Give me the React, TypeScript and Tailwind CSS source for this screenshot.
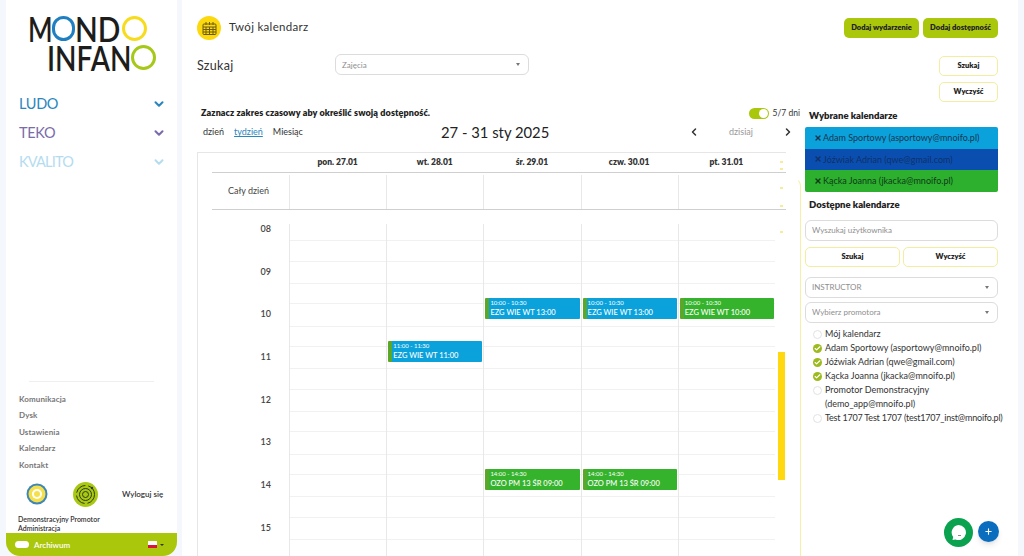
import React from "react";
import { ChevronDown, ChevronLeft, ChevronRight, Check, X, Plus } from "lucide-react";

const font = { fontFamily: "Lato, 'Noto Sans', sans-serif" };

function Logo() {
  return (
    <div className="flex flex-col font-semibold text-[#1d1d1b] text-[35px] leading-[27px] ml-[22px] pt-[15px]">
      <div className="flex items-center h-[27px]">
        <span className="inline-block w-[24px] origin-left scale-x-[0.75]">M</span>
        <span className="inline-block rounded-full border-[3px] border-[#1f7fc0] w-[23px] h-[25px]" />
        <span className="inline-block w-[47px] origin-left scale-x-[0.85]">ND</span>
        <span className="inline-block rounded-full border-[3px] border-[#f7dc1e] w-[25px] h-[25px]" />
      </div>
      <div className="flex items-center h-[27px] ml-[19px] mt-[2px]">
        <span className="inline-block w-[84px] origin-left scale-x-[0.8]">INFAN</span>
        <span className="inline-block rounded-full border-[3px] border-[#a6c818] w-[25px] h-[25px]" />
      </div>
    </div>
  );
}

function NavItem({ label, color, cls }: { label: string; color: string; cls?: string }) {
  return (
    <div className={`flex items-center justify-between h-[29px] pl-[13px] pr-[11px] ${color}`}>
      <span className={`text-[14.5px] font-normal ${cls ?? ""}`}>{label}</span>
      <ChevronDown size={14} strokeWidth={3.5} />
    </div>
  );
}

function Sidebar() {
  return (
    <aside className="w-[171px] ml-[6px] shrink-0 bg-white rounded-b-[14px] flex flex-col h-full">
      <div className="h-[89px]"><Logo /></div>
      <NavItem label="LUDO" color="text-[#2a86bd]" cls="tracking-[-0.3px]" />
      <NavItem label="TEKO" color="text-[#7a6bab]" cls="tracking-[-0.3px]" />
      <NavItem label="KVALITO" color="text-[#b4dcf0]" cls="tracking-[-0.8px]" />
      <div className="flex-1" />
      <div className="mx-[23px] border-t border-[#eeeff2]" />
      <nav className="mt-[12px] pl-[13px] flex flex-col gap-[5px] text-[8px] leading-[11.5px] font-bold text-[#777] tracking-[0.1px]">
        <span>Komunikacja</span>
        <span>Dysk</span>
        <span>Ustawienia</span>
        <span>Kalendarz</span>
        <span>Kontakt</span>
      </nav>
      <div className="flex items-center mt-[6px] h-[34px]">
        <svg className="ml-[20px]" width="22" height="22" viewBox="0 0 22 22">
          <circle cx="11" cy="11" r="10.5" fill="#3f86b8" />
          <circle cx="11" cy="11" r="8.5" fill="#f5e04a" />
          <circle cx="11" cy="11" r="5" fill="#ffffff" />
          <circle cx="11" cy="11" r="3" fill="#f5e04a" />
        </svg>
        <svg className="ml-[25px]" width="25" height="25" viewBox="0 0 25 25" fill="none" stroke="#2e3a16">
          <circle cx="12.5" cy="12.5" r="12.5" fill="#a9c813" stroke="none" />
          <circle cx="12.5" cy="12.5" r="9" strokeWidth="1" strokeDasharray="12 3" />
          <circle cx="12.5" cy="12.5" r="6" strokeWidth="1" />
          <circle cx="12.5" cy="12.5" r="3" strokeWidth="1" />
          <circle cx="19" cy="6" r="1.2" fill="#2e3a16" stroke="none" />
        </svg>
        <span className="ml-[24px] text-[8px] font-semibold text-[#333]">Wyloguj się</span>
      </div>
      <div className="pl-[12px] mt-[4px] text-[7px] leading-[9px] font-semibold text-[#333]">
        <div>Demonstracyjny Promotor</div>
        <div>Administracja</div>
      </div>
      <div className="h-[23px] bg-[#abc70c] rounded-b-[14px] flex items-center pl-[9px] pr-[13px]">
        <span className="w-[14px] h-[7px] rounded-full bg-white" />
        <span className="ml-[5px] text-[8px] font-semibold text-white">Archiwum</span>
        <span className="ml-auto flex flex-col w-[9px] h-[7px]">
          <span className="h-1/2 bg-white" />
          <span className="h-1/2 bg-[#dc143c]" />
        </span>
        <span className="ml-[3px] w-0 h-0 border-x-[2px] border-x-transparent border-t-[2px] border-t-[#333]" />
      </div>
    </aside>
  );
}

function CalendarIcon() {
  return (
    <span className="w-[24px] h-[24px] rounded-full bg-[#fcd90f] flex items-center justify-center">
      <svg width="15" height="15" viewBox="0 0 15 15" fill="none" stroke="#6b5a12" strokeWidth="1">
        <rect x="1" y="3" width="13" height="10.5" rx="1" />
        <path d="M1 6h13M1 8.5h13M1 11h13M4 1v3M7.5 1v3M11 1v3M4 6v7.5M7.5 6v7.5M11 6v7.5" />
      </svg>
    </span>
  );
}

function Select({ label, w, h }: { label: string; w?: string; h?: string }) {
  return (
    <div className={`${w ?? "w-full"} ${h ?? "h-[21px]"} border border-[#dcdcdc] rounded-[6px] bg-white flex items-center justify-between pl-[6px] pr-[8px] text-[8px] text-[#8e8e8e]`}>
      <span>{label}</span>
      <span className="w-0 h-0 border-x-[2.5px] border-x-transparent border-t-[3px] border-t-[#777]" />
    </div>
  );
}

function OutlineButton({ label, cls }: { label: string; cls: string }) {
  return (
    <button className={`h-[20px] rounded-[5px] border border-[#f3eda0] bg-white text-[7.5px] font-extrabold text-[#222] ${cls}`}>
      {label}
    </button>
  );
}

const days = ["pon. 27.01", "wt. 28.01", "śr. 29.01", "czw. 30.01", "pt. 31.01"];
const hours = ["08", "09", "10", "11", "12", "13", "14", "15"];

type Ev = { day: number; top: number; time: string; title: string; bg: string };
const events: Ev[] = [
  { day: 1, top: 117, time: "11:00 - 11:30", title: "EZG WIE WT 11:00", bg: "bg-[#0ba2dc]" },
  { day: 2, top: 74, time: "10:00 - 10:30", title: "EZG WIE WT 13:00", bg: "bg-[#0ba2dc]" },
  { day: 3, top: 74, time: "10:00 - 10:30", title: "EZG WIE WT 13:00", bg: "bg-[#0ba2dc]" },
  { day: 4, top: 74, time: "10:00 - 10:30", title: "EZG WIE WT 10:00", bg: "bg-[#36b32c]" },
  { day: 2, top: 245, time: "14:00 - 14:30", title: "OZO PM 13 ŚR 09:00", bg: "bg-[#36b32c]" },
  { day: 3, top: 245, time: "14:00 - 14:30", title: "OZO PM 13 ŚR 09:00", bg: "bg-[#36b32c]" },
];

function Calendar() {
  return (
    <div className="w-[589px] h-[404px] border-l border-t border-[#e6e6e6] overflow-hidden relative">
      <div className="ml-[14px] w-[574px] flex h-[20px] border-b border-[#cfcfcf] items-center">
        <div className="w-[77px] shrink-0" />
        {days.map((d) => (
          <div key={d} className="w-[97.2px] text-center text-[8.5px] font-extrabold text-[#333]">{d}</div>
        ))}
      </div>
      <div className="ml-[14px] w-[574px] flex h-[37px] border-b border-[#cfcfcf]">
        <div className="w-[77px] shrink-0 flex items-center justify-center text-[9px] text-[#444] pr-[4px]">Cały dzień</div>
        {days.map((d) => (
          <div key={d} className="w-[97.2px] border-l border-[#e8e8e8] mt-[2px]" />
        ))}
      </div>
      <div className="ml-[14px] w-[574px] flex relative mt-[14px]">
        <div className="w-[77px] shrink-0">
          {hours.map((h) => (
            <div key={h} className="h-[42.67px] text-[9px] leading-[10px] font-semibold text-[#444] text-right pr-[18px]">{h}</div>
          ))}
        </div>
        {days.map((d, i) => (
          <div key={d} className="w-[97.2px] border-l border-[#e8e8e8] relative">
            {hours.map((h) => (
              <div key={h} className="h-[42.67px] pt-[16.33px]">
                <div className="h-[21.33px] border-y border-[#f1f1f1]" />
              </div>
            ))}
            {events.filter((e) => e.day === i).map((e) => (
              <div
                key={e.title + e.top}
                className={`absolute left-[1px] right-[1px] h-[21px] ${e.bg} border-l-[4px] border-l-[#5aa72a] rounded-[1px] text-white pl-[1px] pt-[1px]`}
                style={{ top: e.top }}
              >
                <div className="text-[6px] leading-[8px]">{e.time}</div>
                <div className="text-[7.5px] leading-[11px] font-medium whitespace-nowrap">{e.title}</div>
              </div>
            ))}
          </div>
        ))}
      </div>
      <div className="absolute left-[580px] top-[199px] w-[7px] h-[128px] bg-[#ffd80f]" />
      {[8, 15, 34, 52, 78].map((t) => (
        <div key={t} className="absolute left-[582px] w-[3px] h-[2px] bg-[#f8ec9a]" style={{ top: t }} />
      ))}
    </div>
  );
}

function SelectedCal({ label, bg, text }: { label: string; bg: string; text: string }) {
  return (
    <div className={`h-[21.5px] ${bg} ${text} flex items-center pl-[9px] text-[9px]`}>
      <X size={8} strokeWidth={4} className="mr-[1px]" />
      <span>{label}</span>
    </div>
  );
}

function CheckRow({ label, on, cls }: { label: React.ReactNode; on?: boolean; cls?: string }) {
  return (
    <div className={`flex items-start gap-[3px] text-[9px] leading-[14px] text-[#333] whitespace-nowrap ${cls ?? ""}`}>
      {on ? (
        <span className="mt-[3px] w-[9px] h-[9px] shrink-0 rounded-full bg-[#9dbb1e] flex items-center justify-center">
          <Check size={7} strokeWidth={4} className="text-white" />
        </span>
      ) : (
        <span className="mt-[3px] w-[9px] h-[9px] shrink-0 rounded-full border border-[#e2e2e2] bg-white" />
      )}
      <span>{label}</span>
    </div>
  );
}

export default function App() {
  return (
    <div style={font} className="w-[1024px] h-[556px] overflow-hidden bg-[#f4f8fd] flex text-[#222]">
      <Sidebar />
      <main className="ml-[5px] w-[836px] h-full bg-white pl-[15px] pr-[20px] relative overflow-hidden">
        <div className="flex items-start h-[44px] pt-[16px]">
          <CalendarIcon />
          <span className="ml-[8px] mt-[2px] text-[11.5px] text-[#333] tracking-[0.3px]">Twój kalendarz</span>
          <div className="ml-auto flex gap-[4px] mt-[2px]">
            <button className="w-[75px] h-[20px] rounded-[5px] bg-[#abc70c] text-[7.5px] font-extrabold text-[#222]">Dodaj wydarzenie</button>
            <button className="w-[75px] h-[20px] rounded-[5px] bg-[#abc70c] text-[7.5px] font-extrabold text-[#222]">Dodaj dostępność</button>
          </div>
        </div>
        <div className="flex items-start mt-[10px]">
          <span className="w-[138px] text-[12.5px] text-[#333] tracking-[0.3px] mt-[3px]">Szukaj</span>
          <Select label="Zajęcia" w="w-[194px]" />
          <div className="ml-auto flex flex-col gap-[6px] mt-[2px]">
            <OutlineButton label="Szukaj" cls="w-[59px]" />
            <OutlineButton label="Wyczyść" cls="w-[59px]" />
          </div>
        </div>
        <div className="flex mt-[3px]">
          <div className="w-[604px] shrink-0 relative h-[451px]">
            <div className="flex items-center h-[16px] pl-[4px]">
              <span className="text-[9px] font-extrabold text-[#222] tracking-[0.1px]">Zaznacz zakres czasowy aby określić swoją dostępność.</span>
              <span className="ml-auto flex items-center gap-[4px] text-[8.5px] text-[#333] pr-[1px]">
                <span className="w-[20px] h-[11px] rounded-full bg-[#abc70c] flex items-center justify-end pr-[1px]">
                  <span className="w-[9px] h-[9px] rounded-full bg-white" />
                </span>
                5/7 dni
              </span>
            </div>
            <div className="flex items-center h-[20px] mt-[1px] pl-[6px] relative">
              <div className="flex gap-[10px] text-[9px] text-[#333]">
                <span>dzień</span>
                <span className="text-[#2a86bd] underline">tydzień</span>
                <span>Miesiąc</span>
              </div>
              <span className="absolute left-[244px] text-[14.8px] text-[#222]">27 - 31 sty 2025</span>
              <ChevronLeft size={12} strokeWidth={3} className="absolute left-[491px] text-[#333]" />
              <span className="absolute left-[532px] text-[9px] text-[#999]">dzisiaj</span>
              <ChevronRight size={12} strokeWidth={3} className="absolute left-[585px] text-[#333]" />
            </div>
            <div className="mt-[10px]">
              <Calendar />
            </div>
            <div className="absolute right-0 top-[73px] bottom-0 w-[8px] border-r border-t border-[#f6f0a6] rounded-tr-[8px] border-t-transparent" />
          </div>
          <div className="ml-[4px] w-[193px] shrink-0">
            <div className="mt-[4px] h-[14px] pl-[4px] text-[9.5px] font-extrabold text-[#222] leading-[14px]">Wybrane kalendarze</div>
            <div className="mt-[4px] rounded-[2px] overflow-hidden">
              <SelectedCal label="Adam Sportowy (asportowy@mnoifo.pl)" bg="bg-[#0ba2dc]" text="text-[#1a3550]" />
              <SelectedCal label="Jóźwiak Adrian (qwe@gmail.com)" bg="bg-[#0a4fb0]" text="text-[#10306a]" />
              <SelectedCal label="Kącka Joanna (jkacka@mnoifo.pl)" bg="bg-[#2cb02e]" text="text-[#0f3a18]" />
            </div>
            <div className="mt-[6px] h-[14px] pl-[4px] text-[9.5px] font-extrabold text-[#222] leading-[14px]">Dostępne kalendarze</div>
            <div className="mt-[8px] h-[21px] border border-[#dcdcdc] rounded-[6px] flex items-center pl-[6px] text-[8px] text-[#8e8e8e]">Wyszukaj użytkownika</div>
            <div className="mt-[6px] flex gap-[3px]">
              <OutlineButton label="Szukaj" cls="flex-1" />
              <OutlineButton label="Wyczyść" cls="flex-1" />
            </div>
            <div className="mt-[10px] flex flex-col gap-[4px]">
              <Select label="INSTRUCTOR" />
              <Select label="Wybierz promotora" />
            </div>
            <div className="mt-[4px] pl-[8px] flex flex-col">
              <CheckRow label="Mój kalendarz" />
              <CheckRow on label="Adam Sportowy (asportowy@mnoifo.pl)" />
              <CheckRow on label="Jóźwiak Adrian (qwe@gmail.com)" />
              <CheckRow on label="Kącka Joanna (jkacka@mnoifo.pl)" />
              <CheckRow label={<>Promotor Demonstracyjny<br />(demo_app@mnoifo.pl)</>} />
              <CheckRow cls="tracking-[-0.2px]" label="Test 1707 Test 1707 (test1707_inst@mnoifo.pl)" />
            </div>
          </div>
        </div>
        <div className="absolute left-[762px] top-[518px] w-[29px] h-[29px] rounded-full bg-[#0aa14f] flex items-center justify-center">
          <svg width="17" height="17" viewBox="0 0 17 17">
            <path d="M8.5 1a7.5 7.5 0 1 1-3 14.4L2.5 16l.7-3A7.5 7.5 0 0 1 8.5 1z" fill="#fff" />
            <rect x="8" y="11" width="3" height="1" fill="#888" />
          </svg>
        </div>
        <div className="absolute left-[796px] top-[521px] w-[21px] h-[21px] rounded-full bg-[#0a6dbd] shadow-md flex items-center justify-center text-white">
          <Plus size={9} strokeWidth={3} />
        </div>
      </main>
    </div>
  );
}
